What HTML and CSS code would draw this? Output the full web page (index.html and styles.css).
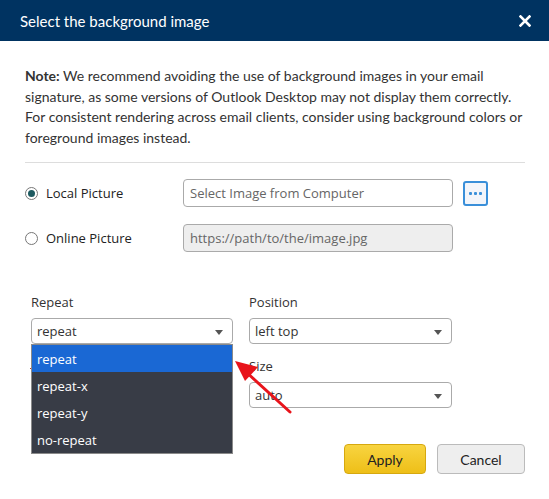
FILE: index.html
```html
<!DOCTYPE html>
<html>
<head>
<meta charset="utf-8">
<link rel="stylesheet" href="styles.css">
</head>
<body>
<div class="dialog">
  <div class="header">
    <span class="title">Select the background image</span>
    <svg class="close" width="12" height="12" viewBox="0 0 12 12"><path d="M1.5 1.5 L10.5 10.5 M10.5 1.5 L1.5 10.5" stroke="#fff" stroke-width="2.6" stroke-linecap="square"/></svg>
  </div>
  <div class="body">
    <p class="note"><b>Note:</b> We recommend avoiding the use of background images in your email signature, as some versions of Outlook Desktop may not display them correctly. For consistent rendering across email clients, consider using background colors or foreground images instead.</p>
    <div class="divider"></div>
    <div class="source-row">
      <label class="radio-label"><span class="radio checked"></span>Local Picture</label>
      <div class="text-input">Select Image from Computer</div>
      <button class="browse"><span class="dot"></span><span class="dot"></span><span class="dot"></span></button>
    </div>
    <div class="source-row second">
      <label class="radio-label"><span class="radio"></span>Online Picture</label>
      <div class="text-input disabled">https://path/to/the/image.jpg</div>
    </div>
    <div class="options">
      <div class="field">
        <div class="field-label">Repeat</div>
        <div class="select">repeat<span class="caret"></span></div>
        <div class="dropdown">
          <div class="option active">repeat</div>
          <div class="option">repeat-x</div>
          <div class="option">repeat-y</div>
          <div class="option">no-repeat</div>
        </div>
      </div>
      <div class="field">
        <div class="field-label">Position</div>
        <div class="select">left top<span class="caret"></span></div>
      </div>
      <div class="field">
        <div class="field-label"><span class="mark"></span></div>
        <div class="select"><span class="caret"></span></div>
      </div>
      <div class="field">
        <div class="field-label">Size</div>
        <div class="select">auto<span class="caret"></span></div>
      </div>
    </div>
    <div class="actions">
      <button class="btn apply">Apply</button>
      <button class="btn cancel">Cancel</button>
    </div>
  </div>
  <svg class="pointer" width="80" height="70" viewBox="0 0 80 70">
    <line x1="57" y1="63" x2="12" y2="22" stroke="#e8141b" stroke-width="3" stroke-linecap="round"/>
    <polygon points="2,12 25,18 12,32" fill="#e8141b"/>
  </svg>
</div>
</body>
</html>
```

FILE: styles.css
```css
* { box-sizing: border-box; }
html, body { margin: 0; padding: 0; background: #fff; }
body { width: 549px; height: 499px; overflow: hidden; font-family: "Open Sans", sans-serif; }

.dialog { position: relative; width: 549px; height: 499px; }

.header {
  height: 41px;
  background: #003361;
  display: flex;
  align-items: center;
  justify-content: space-between;
  padding: 0 18px 0 20px;
}
.title { font-family: Lato, sans-serif; font-size: 15px; color: #fff; }
.close { display: block; }

.body { padding: 25px 24px 0 25px; }

.note {
  margin: 0;
  font-family: Lato, sans-serif;
  font-size: 14px;
  line-height: 20.5px;
  color: #333;
}
.note b { font-weight: 700; }

.divider { height: 1px; background: #ddd; margin-top: 14px; }

.source-row { display: flex; align-items: center; margin-top: 16px; }
.source-row.second { margin-top: 17px; }

.radio-label {
  width: 158px;
  display: flex;
  align-items: center;
  font-size: 13px;
  color: #222;
}
.radio {
  width: 13px; height: 13px;
  border: 1px solid #777;
  border-radius: 50%;
  margin-right: 8px;
  position: relative;
  background: #fff;
}
.radio.checked::after {
  content: "";
  position: absolute;
  left: 2px; top: 2px;
  width: 7px; height: 7px;
  border-radius: 50%;
  background: #1d5a60;
}

.text-input {
  width: 270px;
  height: 28px;
  border: 1px solid #aaa;
  border-radius: 4px;
  padding: 0 0 0 6px;
  display: flex;
  align-items: center;
  font-size: 13px;
  color: #666;
}
.text-input.disabled { background: #eee; color: #666; }

.browse {
  margin-left: 10px;
  width: 25px; height: 25px;
  border: 2px solid #3a8fd9;
  border-radius: 3px;
  background: #f3f5fa;
  padding: 0;
  display: flex;
  align-items: center;
  justify-content: center;
  gap: 2px;
}
.dot { width: 3px; height: 3px; background: #3a8fd9; border-radius: 1px; }

.options {
  display: grid;
  grid-template-columns: 202px 203px;
  column-gap: 16px;
  row-gap: 13px;
  margin-top: 41px;
  padding-left: 6px;
}
.field { position: relative; }
.field-label { font-size: 13px; line-height: 18px; height: 18px; color: #333; margin-bottom: 7px; position: relative; }
.mark { position: absolute; left: -1px; top: 11px; width: 2px; height: 1px; background: #c0392b; }

.select {
  height: 26px;
  border: 1px solid #aaa;
  border-radius: 4px;
  padding-left: 5px;
  display: flex;
  align-items: center;
  font-size: 13px;
  color: #333;
  position: relative;
}
.caret {
  position: absolute;
  right: 9px;
  top: 11px;
  width: 0; height: 0;
  border-left: 4px solid transparent;
  border-right: 4px solid transparent;
  border-top: 5px solid #555;
}

.dropdown {
  position: absolute;
  left: 0;
  top: 51px;
  width: 202px;
  background: #383c46;
  border: 1px solid #8a8a8a;
  z-index: 2;
}
.option {
  height: 27px;
  display: flex;
  align-items: center;
  padding-left: 5px;
  font-size: 13px;
  color: #fff;
}
.option.active { background: #1a68d4; }

.actions {
  display: flex;
  justify-content: flex-end;
  gap: 11px;
  margin-top: 36px;
}
.btn {
  height: 30px;
  border-radius: 4px;
  font-family: Lato, sans-serif;
  font-size: 14px;
  color: #222;
  padding: 0;
}
.apply {
  width: 82px;
  background: linear-gradient(#f8d440, #eebf18);
  border: 1px solid #d6a80f;
}
.cancel {
  width: 88px;
  background: #eee;
  border: 1px solid #bbb;
}

.pointer { position: absolute; left: 233px; top: 349px; z-index: 3; }
```
